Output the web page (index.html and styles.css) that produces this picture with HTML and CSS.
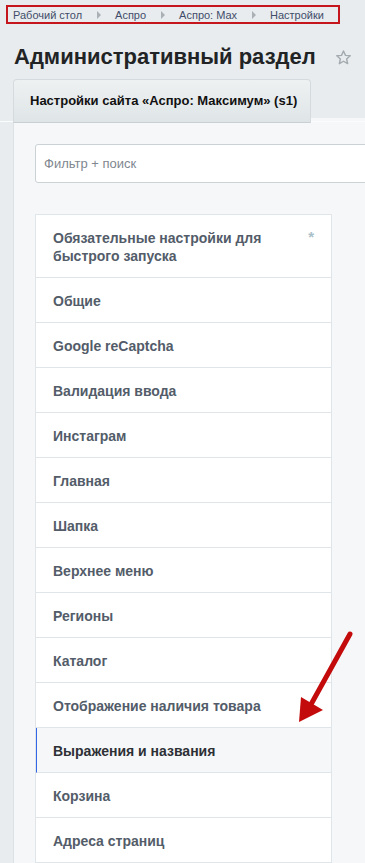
FILE: index.html
```html
<!DOCTYPE html>
<html>
    <head>
        <title>Настройки</title>
        <link rel="stylesheet" href="styles.css">
    </head>

    <body>
        <div class="crumbs">
            <a href="#">Рабочий стол</a><span class="sep"></span>
            <a href="#">Аспро</a><span class="sep"></span>
            <a href="#">Аспро: Max</a><span class="sep"></span>
            <a href="#">Настройки</a>
        </div><!--crumbs-->

        <div class="head">
            <h1>Административный раздел</h1>
            <svg class="star" width="17" height="17" viewBox="0 0 24 24">
                <path d="M12 2.8l2.8 6.2 6.7.6-5.1 4.5 1.5 6.6L12 17.3l-5.9 3.4 1.5-6.6-5.1-4.5 6.7-.6z"
                      fill="none" stroke="#a3abb1" stroke-width="2" stroke-linejoin="round"/>
            </svg>
        </div><!--head-->

        <div class="tabs">
            <div class="tab">Настройки сайта «Аспро: Максимум» (s1)</div>
        </div>

        <div class="panel">
            <input type="text" class="filter" placeholder="Фильтр + поиск">

            <ul class="menu">
                <li class="first">Обязательные настройки для быстрого запуска<span class="req">*</span></li>
                <li>Общие</li>
                <li>Google reCaptcha</li>
                <li>Валидация ввода</li>
                <li>Инстаграм</li>
                <li>Главная</li>
                <li>Шапка</li>
                <li>Верхнее меню</li>
                <li>Регионы</li>
                <li>Каталог</li>
                <li>Отображение наличия товара</li>
                <li class="active">Выражения и названия</li>
                <li>Корзина</li>
                <li>Адреса страниц</li>
            </ul>
        </div><!--panel-->

        <!-- стрелка-пометка поверх списка -->
        <svg class="pointer" width="60" height="100" viewBox="0 0 60 100">
            <path d="M52 4 L11 78" stroke="#c30b0b" stroke-width="5" stroke-linecap="round"/>
            <polygon points="1,92 3,67 25,80" fill="#c30b0b"/>
        </svg>
    </body>
</html>
```

FILE: styles.css
```css
*{margin:0;padding:0;box-sizing:border-box;}

body{
    background-color: #e8ecee;
    font-family: "Liberation Sans", Arial, sans-serif;
    color: #535c69;
    position: relative;
    overflow: hidden;
}

.crumbs{
    margin: 5px 0 0 6px;
    width: 334px;
    height: 19px;
    border: 2px solid #c5161d;
    display: flex;
    align-items: center;
    padding-left: 5px;
    font-size: 11px;
}

.crumbs a{
    color: #424c6a;
    text-decoration: none;
}

.sep{
    width: 0;
    height: 0;
    border-left: 4px solid #a9b0b6;
    border-top: 4px solid transparent;
    border-bottom: 4px solid transparent;
    margin: 0 14px 0 15px;
}

.head{
    display: flex;
    align-items: center;
    padding: 12px 0 0 14px;
    height: 53px;
}

h1{
    font-size: 22px;
    font-weight: bold;
    color: #212325;
}

.star{
    margin-left: 19px;
    margin-top: 2px;
}

.tabs{
    padding-left: 13px;
    height: 43px;
    border-bottom: 1px solid #fbfcfc;
    position: relative;
    z-index: 1;
    margin-top: 2px;
}

.tab{
    width: 298px;
    height: 44px;
    border: 1px solid #d4dadd;
    border-bottom: 1px solid #c9d0d3;
    border-radius: 4px 4px 0 0;
    background: linear-gradient(#eef1f2, #dfe5e7);
    font-size: 13px;
    font-weight: bold;
    color: #111;
    padding: 13px 0 0 16px;
}

.panel{
    margin-left: 13px;
    margin-top: -4px;
    background-color: #f5f7f8;
    border-left: 1px solid #dbe1e4;
    padding: 26px 0 0 21px;
    min-height: 800px;
}

.filter{
    display: block;
    width: 340px;
    height: 39px;
    border: 1px solid #cbd2d6;
    border-radius: 3px;
    background: #fff;
    padding-left: 8px;
    font-family: "Liberation Sans", Arial, sans-serif;
    font-size: 13px;
    color: #333;
}

.filter::placeholder{
    color: #80878f;
}

.menu{
    list-style: none;
    width: 297px;
    margin-top: 31px;
    background: #fff;
    border: 1px solid #dfe5e8;
    border-bottom: 0;
}

.menu li{
    height: 45px;
    border-bottom: 1px solid #dfe5e8;
    padding: 14px 40px 0 17px;
    font-size: 14px;
    font-weight: bold;
    line-height: 18px;
    position: relative;
}

.menu li.first{
    height: 63px;
    padding-top: 14px;
}

.req{
    position: absolute;
    top: 13px;
    right: 17px;
    font-size: 15px;
    color: #a9c0c8;
}

.menu li.active{
    background-color: #f5f7f8;
    border-left: 1px solid #3367e6;
    padding-left: 16px;
    color: #2d3035;
}

.pointer{
    position: absolute;
    left: 298px;
    top: 630px;
}
```
